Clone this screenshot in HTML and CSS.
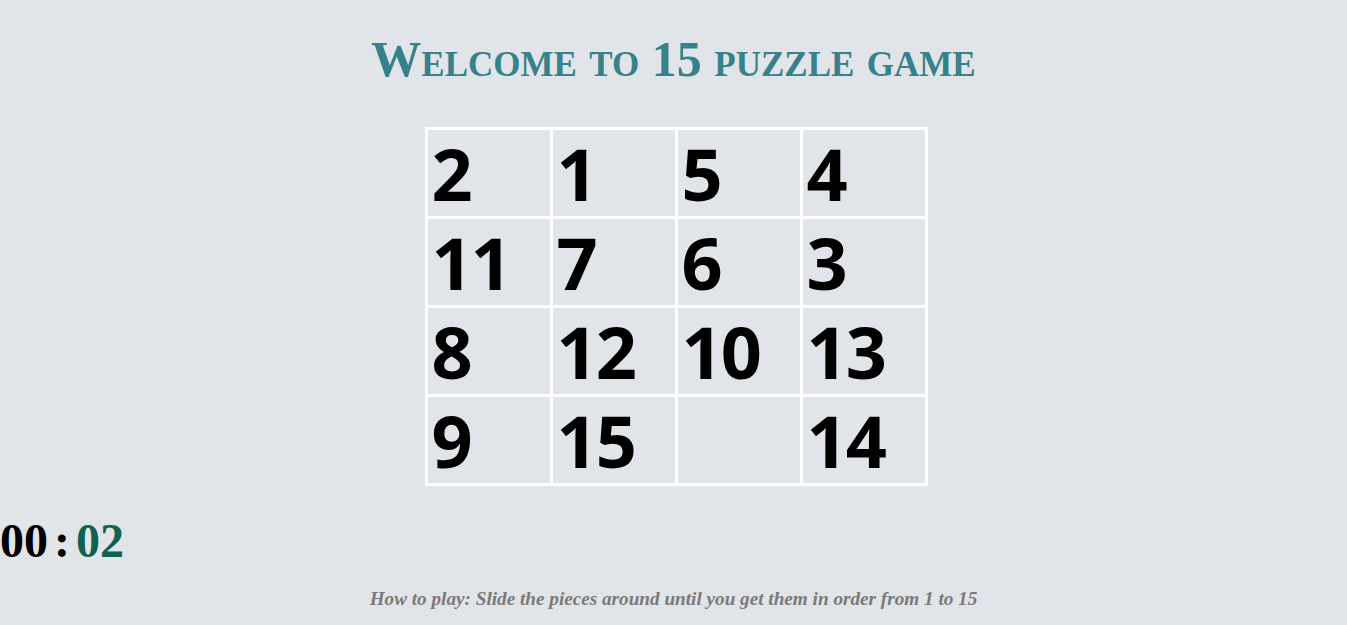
FILE: index.html
```html
<!DOCTYPE html>
<html>
<head>
<meta charset="utf-8">
<title>15 puzzle</title>
<link rel="stylesheet" href="styles.css">
</head>
<body>
<h1 class="title">Welcome to 15 puzzle game</h1>
<div class="board">
  <div class="cell">2</div><div class="cell">1</div><div class="cell">5</div><div class="cell">4</div>
  <div class="cell">11</div><div class="cell">7</div><div class="cell">6</div><div class="cell">3</div>
  <div class="cell">8</div><div class="cell">12</div><div class="cell">10</div><div class="cell">13</div>
  <div class="cell">9</div><div class="cell">15</div><div class="cell"></div><div class="cell">14</div>
</div>
<div class="timer"><span class="min">00</span><span class="sep">:</span><span class="sec">02</span></div>
<p class="howto">How to play: Slide the pieces around until you get them in order from 1 to 15</p>
</body>
</html>
```
FILE: styles.css
```css
html, body {
  margin: 0;
  padding: 0;
}
body {
  background: #e1e4e8;
  font-family: "Liberation Serif", "Times New Roman", serif;
  display: flex;
  flex-direction: column;
  min-height: 625px;
}
.title {
  margin: 31px 0 0;
  font-size: 50px;
  line-height: 57px;
  font-weight: bold;
  font-variant: small-caps;
  color: #37818b;
  text-align: center;
}
.board {
  align-self: center;
  margin-top: 39px;
  margin-left: 5px;
  display: grid;
  grid-template-columns: repeat(4, 122px);
  grid-template-rows: repeat(4, 86px);
  gap: 3px;
  padding: 3px;
  background: #ffffff;
}
.cell {
  background: #e1e4e8;
  display: flex;
  align-items: center;
  padding-left: 4px;
  font-family: "Open Sans", "DejaVu Sans", sans-serif;
  font-weight: 700;
  font-size: 72px;
  line-height: 72px;
  letter-spacing: -2px;
  color: #000;
}
.timer {
  margin-top: 27px;
  font-size: 48px;
  line-height: 55px;
  font-weight: bold;
  display: flex;
}
.min {
  color: #000;
}
.sep {
  margin: 0 6px;
  color: #000;
}
.sec {
  color: #12614f;
}
.howto {
  margin: 20px 0 0;
  font-size: 19.2px;
  line-height: 21px;
  font-style: italic;
  font-weight: bold;
  color: #7a7a7a;
  text-align: center;
}
```
